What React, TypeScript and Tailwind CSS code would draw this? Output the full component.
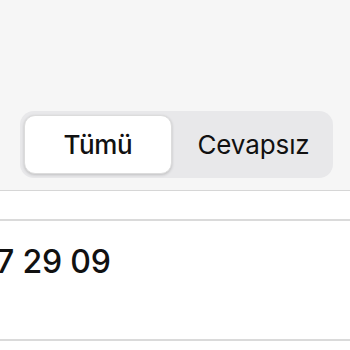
const App: React.FC = () => {
  return (
    <div className="w-[350px] h-[350px] overflow-hidden bg-white font-['Inter',sans-serif] text-[#111]">
      {/* Header with segmented control */}
      <div className="h-[191px] bg-[#f6f6f6] border-b border-[#d6d6d6] pt-[111px] pl-[20px] pr-[17px]">
        <div className="flex h-[67px] rounded-[14px] bg-[#e8e8ea] p-[4px]">
          <div className="w-[148px] flex items-center justify-center rounded-[11px] bg-white shadow-[0_1px_3px_rgba(0,0,0,0.18)] border border-[#dcdcdc]">
            <span className="text-[26px] font-medium tracking-[-0.3px]">Tümü</span>
          </div>
          <div className="flex-1 flex items-center justify-center pl-[6px]">
            <span className="text-[26px] font-normal tracking-[-0.1px]">Cevapsız</span>
          </div>
        </div>
      </div>

      {/* List */}
      <div className="h-[30px] border-b-2 border-[#dadada]"></div>
      <div className="h-[120px] border-b-2 border-[#dadada] pt-[21px]">
        <span className="block -ml-[4px] text-[32px] leading-[40px] font-medium tracking-[-0.2px]">7 29 09</span>
      </div>
    </div>
  );
};

export default App;
